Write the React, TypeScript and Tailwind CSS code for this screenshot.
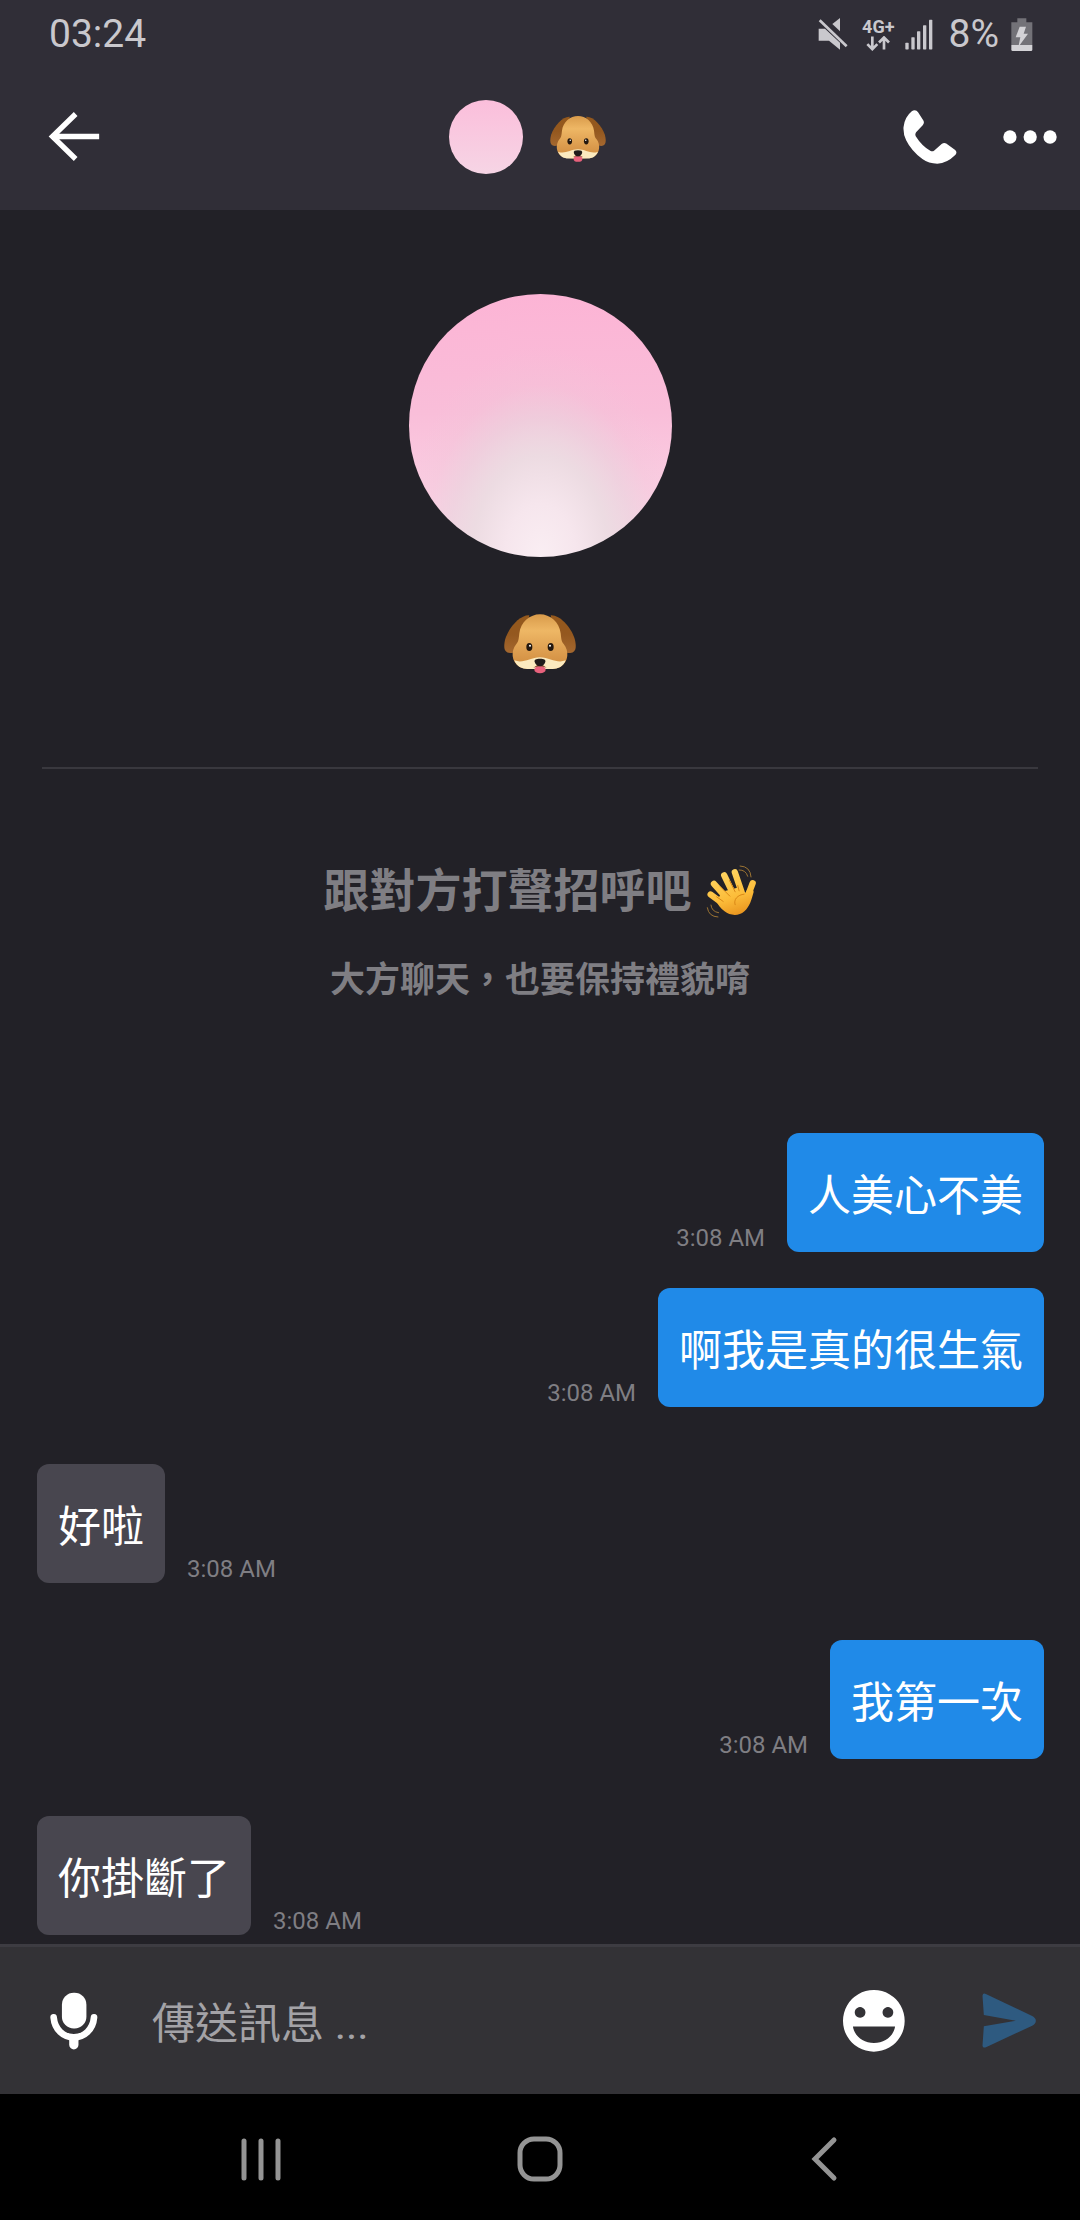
import { useState } from "react";

type Message = {
  id: number;
  text: string;
  time: string;
  mine: boolean;
};

const messages: Message[] = [
  { id: 1, text: "人美心不美", time: "3:08 AM", mine: true },
  { id: 2, text: "啊我是真的很生氣", time: "3:08 AM", mine: true },
  { id: 3, text: "好啦", time: "3:08 AM", mine: false },
  { id: 4, text: "我第一次", time: "3:08 AM", mine: true },
  { id: 5, text: "你掛斷了", time: "3:08 AM", mine: false },
];

function DogEmoji({ className, id }: { className: string; id: string }) {
  return (
    <svg viewBox="342 1003 216 178" className={className} role="img" aria-label="🐶">
      <defs>
        <linearGradient id={`${id}-head`} x1="0" y1="0" x2="0" y2="1">
          <stop offset="0" stopColor="#d99b4b" />
          <stop offset="0.3" stopColor="#eeb765" />
          <stop offset="0.7" stopColor="#dc9c4e" />
          <stop offset="1" stopColor="#cf8a3d" />
        </linearGradient>
        <linearGradient id={`${id}-ear`} x1="0" y1="0" x2="0" y2="1">
          <stop offset="0" stopColor="#94581c" />
          <stop offset="0.5" stopColor="#94581f" />
          <stop offset="1" stopColor="#a5682f" />
        </linearGradient>
      </defs>
      <path
        d="M418 1006C392 1004 358 1040 346 1076C339 1104 343 1117 360 1119C374 1118 390 1112 400 1094Z"
        fill={`url(#${id}-ear)`}
      />
      <path
        d="M482 1006C508 1004 542 1040 554 1076C561 1104 557 1117 540 1119C526 1118 510 1112 500 1094Z"
        fill={`url(#${id}-ear)`}
      />
      <path
        d="M450 1003C420 1003 392 1026 388 1060C386 1078 386 1084 379 1092C362 1112 364 1146 388 1160C402 1168 430 1167 450 1167C470 1167 498 1168 512 1160C536 1146 538 1112 521 1092C514 1084 514 1078 512 1060C508 1026 480 1003 450 1003Z"
        fill={`url(#${id}-head)`}
      />
      <path
        d="M373 1141C398 1152 420 1133 450 1132C480 1133 502 1152 527 1141C520 1160 504 1167 488 1167H412C396 1167 380 1160 373 1141Z"
        fill="#fbeabf"
      />
      <ellipse cx="418" cy="1101" rx="9" ry="12" fill="#24180f" />
      <ellipse cx="482" cy="1101" rx="9" ry="12" fill="#24180f" />
      <circle cx="420" cy="1097" r="3" fill="#fff" />
      <circle cx="480" cy="1097" r="3" fill="#fff" />
      <ellipse cx="450" cy="1169" rx="17" ry="11" fill="#e8617c" />
      <path d="M450 1150L430 1163Q450 1154 470 1163Z" fill="#7b3a24" />
      <path
        d="M450 1136C462 1136 468 1139 466 1146C464 1154 456 1159 450 1159C444 1159 436 1154 434 1146C432 1139 438 1136 450 1136Z"
        fill="#1f1b1a"
      />
    </svg>
  );
}

function WaveEmoji() {
  return (
    <svg viewBox="1214 372 154 164" className="h-[55px] w-[51px]" role="img" aria-label="👋" fill="none">
      <defs>
        <linearGradient id="hand" gradientUnits="userSpaceOnUse" x1="1260" y1="385" x2="1310" y2="530">
          <stop offset="0" stopColor="#ffd766" />
          <stop offset="0.6" stopColor="#fcbd3a" />
          <stop offset="1" stopColor="#e8921d" />
        </linearGradient>
      </defs>
      <g stroke="url(#hand)" strokeWidth="19" strokeLinecap="round">
        <path d="M1301 396L1323 460" />
        <path d="M1269 405L1298 465" />
        <path d="M1238 431L1280 478" />
        <path d="M1228 463L1270 494" />
        <path d="M1355 429L1334 484" />
      </g>
      <path
        d="M1262 455L1320 440L1330 462C1336 455 1342 440 1350 436L1358 455C1352 478 1346 500 1330 514C1312 530 1286 527 1270 514C1258 505 1250 494 1246 485Z"
        fill="url(#hand)"
      />
      <g stroke="#d98716" strokeWidth="3" strokeLinecap="round">
        <path d="M1285 421L1302 455" />
        <path d="M1310 436L1314 452" />
        <path d="M1257 439L1286 468" />
        <path d="M1246 470L1266 484" />
        <path d="M1329 462C1310 464 1296 478 1302 494" />
      </g>
      <g stroke="#9c7433" strokeWidth="3" strokeLinecap="round">
        <path d="M1317 377Q1348 378 1350 410" />
        <path d="M1314 389Q1334 388 1340 408" />
        <path d="M1218 503Q1222 530 1250 531" />
        <path d="M1229 495Q1231 515 1252 518" />
      </g>
    </svg>
  );
}

function StatusBar() {
  return (
    <div className="flex h-[66px] items-center justify-between pt-0.5 pr-[47px] pl-[49px] text-[39px] leading-[48px] text-[#c9c8cd]">
      <time>03:24</time>
      <div className="flex items-center">
        <svg viewBox="118 46 88 96" className="mr-[14px] h-8 w-[30px]" fill="currentColor" aria-hidden="true">
          <path d="M119 78H138L183 120V141L150 114H119Z" />
          <path d="M160 64L183 46V86Z" />
          <path d="M122 53L203 131" stroke="currentColor" strokeWidth="8" />
        </svg>
        <div className="mr-[10px] flex flex-col items-center">
          <span className="text-[18px] leading-[18px] font-bold">4G+</span>
          <svg viewBox="260 102 72 44" className="h-[15px] w-6" fill="none" stroke="currentColor" strokeWidth="8" aria-hidden="true">
            <path d="M279 103V140M264 126L279 141L294 126" />
            <path d="M314 142V107M299 121L314 106L329 121" />
          </svg>
        </div>
        <svg viewBox="374 48 84 92" className="mr-4 h-[31px] w-7" fill="currentColor" aria-hidden="true">
          <rect x="375" y="119" width="10" height="20" rx="2" />
          <rect x="393" y="102" width="10" height="37" rx="2" />
          <rect x="410" y="84" width="10" height="55" rx="2" />
          <rect x="428" y="66" width="10" height="73" rx="2" />
          <rect x="446" y="50" width="10" height="89" rx="2" />
        </svg>
        <span className="mr-3">8%</span>
        <svg viewBox="692 45 66 99" className="h-[33px] w-[22px]" aria-hidden="true">
          <path d="M711 46H738V58H756V126H693V58H711Z" fill="#737278" />
          <path d="M693 126H756V140Q756 144 752 144H697Q693 144 693 140Z" fill="#d3d2d6" />
          <path d="M718 71H737L730 92H743L714 132L720 103H706Z" fill="#d3d2d6" />
        </svg>
      </div>
    </div>
  );
}

function ChatHeader() {
  return (
    <header className="bg-[#302e37]">
      <StatusBar />
      <div className="grid h-36 grid-cols-[1fr_auto_1fr] items-center pr-[23px] pb-[3px] pl-12 text-white">
        <button type="button" aria-label="返回" className="w-fit">
          <svg viewBox="144 332 154 148" className="h-[49px] w-[52px]" fill="none" stroke="currentColor" strokeWidth="16" aria-hidden="true">
            <path d="M297 406H156M226 338L156 406L226 474" />
          </svg>
        </button>
        <div className="flex items-center gap-[27px] pr-[50px]">
          <div className="size-[74px] rounded-full bg-linear-to-b from-[#fbbedb] to-[#f6d5e5]" />
          <DogEmoji id="dog-sm" className="mt-1 h-[46px] w-14" />
        </div>
        <div className="flex items-center justify-end gap-[46px]">
          <button type="button" aria-label="通話">
            <svg viewBox="368 328 162 163" className="size-[54px]" fill="currentColor" aria-hidden="true">
              <path d="M403 329Q409 329 413 335L429 360Q433 368 427 374L407 395Q403 401 406 407Q424 436 451 452Q457 454 462 450L484 431Q491 425 498 429L525 449Q532 456 526 463Q500 489 471 490Q445 490 426 476Q392 450 377 419Q368 402 369 380Q372 350 394 332Q398 329 403 329Z" />
            </svg>
          </button>
          <button type="button" aria-label="更多">
            <svg viewBox="668 389 163 42" className="h-[14px] w-[54px]" fill="currentColor" aria-hidden="true">
              <circle cx="689" cy="410" r="20" />
              <circle cx="750" cy="410" r="20" />
              <circle cx="810" cy="410" r="20" />
            </svg>
          </button>
        </div>
      </div>
    </header>
  );
}

function MessageRow({ message, grouped }: { message: Message; grouped: boolean }) {
  return (
    <li
      className={`flex items-end gap-[22px] ${message.mine ? "flex-row-reverse" : ""} ${
        grouped ? "mt-9" : "mt-[57px]"
      }`}
    >
      <p
        className={`rounded-xl px-[21px] pt-8 pb-6 text-[43px] leading-[63px] text-white ${
          message.mine ? "bg-[#208ae8]" : "bg-[#48464f]"
        }`}
      >
        {message.text}
      </p>
      <time className="text-[24px] leading-7 text-[#7f7e83]">{message.time}</time>
    </li>
  );
}

function Composer() {
  const [draft, setDraft] = useState("");

  return (
    <form
      className="flex h-[150px] items-center border-t-3 border-[#3d3c42] bg-[#333236] pr-11 pl-[50px]"
      onSubmit={(e) => {
        e.preventDefault();
        setDraft("");
      }}
    >
      <button type="button" aria-label="語音訊息" className="text-white">
        <svg viewBox="148 610 145 174" className="h-[58px] w-12" aria-hidden="true">
          <rect x="184" y="612" width="74" height="108" rx="36" fill="currentColor" />
          <path
            d="M159 686C162 722 188 746 220 746C252 746 278 722 281 686"
            fill="none"
            stroke="currentColor"
            strokeWidth="20"
            strokeLinecap="round"
          />
          <path d="M220 750V769" stroke="currentColor" strokeWidth="28" strokeLinecap="round" />
        </svg>
      </button>
      <input
        type="text"
        aria-label="傳送訊息"
        placeholder="傳送訊息 ..."
        value={draft}
        onChange={(e) => setDraft(e.target.value)}
        className="ml-[54px] min-w-0 flex-1 bg-transparent pt-2 text-[43px] leading-[63px] text-white outline-none placeholder:text-[#a3a2a6]"
      />
      <button type="button" aria-label="表情符號" className="text-white">
        <svg viewBox="190 268 184 185" className="size-[62px]" aria-hidden="true">
          <path
            fillRule="evenodd"
            fill="currentColor"
            d="M282 268A92 92 0 1 1 281 268ZM240 319A16 16 0 1 0 241 319ZM323 319A16 16 0 1 0 324 319ZM219 377H345C340 406 314 426 282 426C250 426 224 406 219 377Z"
          />
        </svg>
      </button>
      <button type="submit" aria-label="傳送" className="ml-[77px] text-[#2e5a80]">
        <svg viewBox="607 281 161 165" className="h-[55px] w-[54px]" fill="currentColor" aria-hidden="true">
          <path d="M608 289Q609 280 618 284L757 350Q768 356 768 364Q768 373 757 379L620 443Q609 448 608 439L612 381L708 364L612 347Z" />
        </svg>
      </button>
    </form>
  );
}

function NavBar() {
  return (
    <nav className="grid h-[126px] grid-cols-[1fr_auto_1fr] items-center bg-black px-[241px] pt-1 text-[#949494]">
      <button type="button" aria-label="最近使用" className="w-fit">
        <svg viewBox="0 0 40 44" className="h-11 w-10" stroke="currentColor" strokeWidth="5" strokeLinecap="round" aria-hidden="true">
          <path d="M3 4V41M20 4V41M37 4V41" />
        </svg>
      </button>
      <button type="button" aria-label="主畫面">
        <svg viewBox="0 0 46 46" className="size-[46px]" fill="none" stroke="currentColor" strokeWidth="5" aria-hidden="true">
          <rect x="3" y="3" width="40" height="40" rx="14" />
        </svg>
      </button>
      <button type="button" aria-label="上一頁" className="w-fit justify-self-end">
        <svg viewBox="0 0 30 46" className="h-[46px] w-[30px]" fill="none" stroke="currentColor" strokeWidth="5" strokeLinecap="round" aria-hidden="true">
          <path d="M25 4L6 23L25 42" />
        </svg>
      </button>
    </nav>
  );
}

export default function App() {
  return (
    <div className="flex min-h-screen flex-col bg-[#222127] font-[Roboto,'Noto_Sans_CJK_TC',sans-serif]" lang="zh-Hant">
      <ChatHeader />

      <main className="flex-1 pb-2">
        <section className="mx-[42px] flex flex-col items-center border-b-2 border-[#39383e] pt-21 pb-[93px]">
          <div className="size-[263px] rounded-full bg-[radial-gradient(ellipse_54%_80%_at_50%_100%,#faeef3_0%,#f6e6ed_25%,rgba(236,220,226,0.95)_48%,rgba(233,212,221,0.6)_66%,rgba(238,200,216,0.25)_82%,rgba(245,190,214,0)_100%),linear-gradient(to_bottom,#fcb4d5_0%,#f9bed9_45%,#fbdbea_100%)]" />
          <DogEmoji id="dog-lg" className="mt-[57px] h-15 w-[72px]" />
        </section>

        <section className="flex flex-col items-center pt-[88px] text-center font-bold text-[#7f7e83]">
          <h1 className="flex items-center gap-[14px] text-[46px] leading-[68px]">
            跟對方打聲招呼吧
            <WaveEmoji />
          </h1>
          <p className="mt-[30px] text-[35px] leading-[52px]">大方聊天，也要保持禮貌唷</p>
        </section>

        <ul className="flex flex-col pt-[69px] pr-9 pl-[37px]">
          {messages.map((message, i) => (
            <MessageRow
              key={message.id}
              message={message}
              grouped={messages[i - 1]?.mine === message.mine}
            />
          ))}
        </ul>
      </main>

      <Composer />
      <NavBar />
    </div>
  );
}
